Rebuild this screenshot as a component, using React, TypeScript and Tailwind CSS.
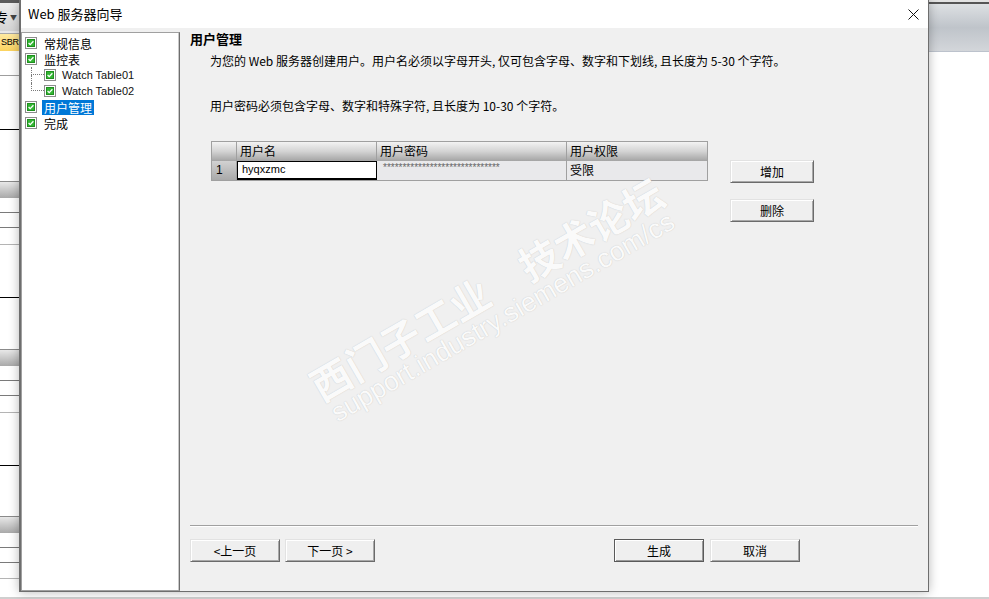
// Web server wizard dialog (user management page)

function Tick() {
  return (
    <svg width="12" height="12" viewBox="0 0 12 12" className="shrink-0">
      <rect x="0.5" y="0.5" width="11" height="11" fill="#fff" stroke="#8d8d8d" />
      <rect x="2.5" y="2.5" width="7" height="7" fill="#33b533" stroke="#1f8f1f" />
      <path d="M3.6 6 L5.2 7.6 L8.4 4.3" fill="none" stroke="#fff" strokeWidth="1.3" />
    </svg>
  );
}

function Btn({
  children,
  className = "",
  def,
}: {
  children: React.ReactNode;
  className?: string;
  def?: boolean;
}) {
  return (
    <button
      className={`h-[23px] text-[12px] leading-[21px] text-black bg-[#efefef] border ${
        def
          ? "border-[#5a5a5a] shadow-[inset_1px_1px_0_#fff,inset_-1px_-1px_0_#9a9a9a]"
          : "border-t-[#e2e2e2] border-l-[#e2e2e2] border-r-[#6b6b6b] border-b-[#6b6b6b] shadow-[inset_1px_1px_0_#fff,inset_-1px_-1px_0_#a8a8a8]"
      } ${className}`}
    >
      {children}
    </button>
  );
}

const tree = [
  { label: "常规信息", child: false },
  { label: "监控表", child: false },
  { label: "Watch Table01", child: true, last: false },
  { label: "Watch Table02", child: true, last: true },
  { label: "用户管理", child: false, sel: true },
  { label: "完成", child: false },
];

function LeftStrip() {
  return (
    <div className="w-[19px] shrink-0 flex flex-col bg-white overflow-hidden">
      <div className="h-[3px] bg-[#5b5b5b]"></div>
      <div className="h-[28px] flex items-center bg-linear-to-b from-[#ededed] to-[#d5d5d5] text-[13px] leading-[16px]">
        <span className="-ml-[5px]">专</span>
        <span className="text-[7px] ml-[2px] text-[#444]">▼</span>
      </div>
      <div className="h-[3px] border-b border-[#a8a8a8] bg-[#e8e8e8]"></div>
      <div className="h-[17px] bg-linear-to-b from-[#ffeaa0] to-[#fbd35e] text-[9px] leading-[17px] tracking-[-0.3px] font-['Liberation_Sans',sans-serif] pl-[1px]">
        SBR
      </div>
      <div className="h-[25px] border-b border-[#9e9e9e]"></div>
      <div className="h-[54px] border-b border-black"></div>
      <div className="h-[51px]"></div>
      <div className="h-[17px] border-t border-[#8a8a8a] bg-linear-to-b from-[#e8e8e8] to-[#a9a9a9]"></div>
      <div className="h-[15px] border-b border-[#7a7a7a]"></div>
      <div className="h-[15px] border-b border-[#7a7a7a]"></div>
      <div className="h-[17px] border-b border-[#b4b4b4]"></div>
      <div className="h-[53px] border-b border-black"></div>
      <div className="h-[51px]"></div>
      <div className="h-[17px] border-t border-[#8a8a8a] bg-linear-to-b from-[#e8e8e8] to-[#a9a9a9]"></div>
      <div className="h-[15px] border-b border-[#7a7a7a]"></div>
      <div className="h-[15px] border-b border-[#7a7a7a]"></div>
      <div className="h-[17px] border-b border-[#b4b4b4]"></div>
      <div className="h-[53px] border-b border-black"></div>
      <div className="h-[50px]"></div>
      <div className="h-[17px] border-t border-[#8a8a8a] bg-linear-to-b from-[#e8e8e8] to-[#a9a9a9]"></div>
      <div className="h-[15px] border-b border-[#7a7a7a]"></div>
      <div className="h-[15px] border-b border-[#7a7a7a]"></div>
      <div className="h-[16px] border-b border-[#b4b4b4]"></div>
    </div>
  );
}

function RightStrip() {
  return (
    <div className="flex-1 flex flex-col bg-white">
      <div className="h-[2px] bg-[#e2e2e2]"></div>
      <div className="h-[2px] bg-[#555]"></div>
      <div className="h-[48px] border-b border-[#bcc2cc] bg-linear-to-b from-[#dde0e3] via-[#bfc4ca] to-[#d3d6da]"></div>
    </div>
  );
}

export default function App() {
  return (
    <div className="w-[989px] h-[599px] relative overflow-hidden bg-white flex flex-col font-['Noto_Sans_CJK_SC','Noto_Sans',sans-serif] text-black">
      <div className="h-[592px] flex">
        <LeftStrip />

        {/* dialog */}
        <div className="relative z-10 w-[910px] shrink-0 flex flex-col bg-[#f0f0f0] border-l-2 border-r border-b border-[#6e6e6e] shadow-[0_0_10px_rgba(0,0,0,0.28)]">
          <div className="h-[28px] bg-white flex items-center pl-[7px] pr-[9px]">
            <span className="text-[13px] leading-[16px]">Web 服务器向导</span>
            <svg width="11" height="11" viewBox="0 0 11 11" className="ml-auto">
              <path d="M0.5 0.5 L10.5 10.5 M10.5 0.5 L0.5 10.5" stroke="#111" strokeWidth="1" />
            </svg>
          </div>

          <div className="flex-1 flex pt-[4px]">
            {/* tree */}
            <div className="w-[159px] shrink-0 bg-white border border-[#a0a0a0] border-r-[#6e6e6e] shadow-[inset_-1px_0_0_#c9c9c9] pt-[2px]">
              {tree.map((t) =>
                t.child ? (
                  <div key={t.label} className="h-[16px] flex items-center pl-[9px]">
                    <div className="w-[13px] h-[16px] flex flex-col shrink-0">
                      <div className="h-[8px] border-l border-b border-dotted border-[#7a7a7a]"></div>
                      <div className={`h-[8px] ${t.last ? "" : "border-l border-dotted border-[#7a7a7a]"}`}></div>
                    </div>
                    <Tick />
                    <span className="ml-[4px] px-[2px] text-[11px] leading-[15px] font-['Liberation_Sans',sans-serif] text-[#111]">
                      {t.label}
                    </span>
                  </div>
                ) : (
                  <div key={t.label} className="h-[16px] flex items-center pl-[3px]">
                    <Tick />
                    <span
                      className={`ml-[5px] px-[2px] text-[12px] leading-[15px] ${
                        t.sel ? "bg-[#0078d7] text-white" : ""
                      }`}
                    >
                      {t.label}
                    </span>
                  </div>
                )
              )}
            </div>

            {/* page */}
            <div className="flex-1 flex flex-col px-[10px] pb-[29px]">
              <div className="text-[13px] leading-[14px] font-bold">用户管理</div>
              <div className="mt-[7px] ml-[20px] text-[12px] leading-[16px]">
                为您的 Web 服务器创建用户。用户名必须以字母开头, 仅可包含字母、数字和下划线, 且长度为 5-30 个字符。
              </div>
              <div className="mt-[29px] ml-[20px] text-[12px] leading-[16px]">
                用户密码必须包含字母、数字和特殊字符, 且长度为 10-30 个字符。
              </div>

              <div className="mt-[27px] ml-[21px] flex items-start">
                <div className="w-[497px] border border-[#a0a0a0] text-[12px]">
                  <div className="h-[19px] flex bg-linear-to-b from-[#f3f3f3] via-[#d3d3d3] to-[#a4a4a4] leading-[18px]">
                    <div className="w-[25px] border-r border-[#a0a0a0]"></div>
                    <div className="w-[140px] border-r border-[#a0a0a0] pl-[3px]">用户名</div>
                    <div className="w-[190px] border-r border-[#a0a0a0] pl-[3px]">用户密码</div>
                    <div className="w-[140px] pl-[3px]">用户权限</div>
                  </div>
                  <div className="h-[19px] flex bg-[#e9e9eb] leading-[18px]">
                    <div className="w-[25px] border-r border-[#a0a0a0] bg-linear-to-b from-[#d2d2d2] to-[#a9a9a9] pl-[4px] font-['Liberation_Sans',sans-serif]">
                      1
                    </div>
                    <div className="w-[140px] bg-white border border-b-2 border-black pl-[4px] text-[11px] leading-[15px] font-['Liberation_Sans',sans-serif]">
                      hyqxzmc
                    </div>
                    <div className="w-[190px] border-r border-[#a0a0a0] pl-[6px] pt-[2px] text-[10px] leading-[10px] font-['Liberation_Sans',sans-serif] text-[#666]">
                      ******************************
                    </div>
                    <div className="w-[140px] pl-[3px]">受限</div>
                  </div>
                </div>

                <div className="ml-[22px] pt-[19px] flex flex-col">
                  <Btn className="w-[84px]">增加</Btn>
                  <Btn className="w-[84px] mt-[16px]">删除</Btn>
                </div>
              </div>

              <div className="mt-auto border-t border-[#a0a0a0] border-b border-b-white"></div>
              <div className="mt-[12px] flex">
                <Btn className="w-[90px]">&lt;上一页</Btn>
                <Btn className="w-[90px] ml-[5px]">下一页 &gt;</Btn>
                <Btn def className="w-[90px] ml-[239px]">生成</Btn>
                <Btn className="w-[90px] ml-[6px]">取消</Btn>
              </div>
            </div>
          </div>
        </div>

        <RightStrip />
      </div>
      <div className="flex-1 border-b-2 border-[#cfcfcf] bg-white"></div>

      {/* forum watermark */}
      <div className="absolute left-[493px] top-[300px] -translate-x-1/2 -translate-y-1/2 -rotate-[30deg] z-20 pointer-events-none whitespace-nowrap text-center text-[#fafafa] [text-shadow:0_0_1px_#bcbcbc]">
        <div className="text-[40px] leading-[40px] font-bold">西门子工业　技术论坛</div>
        <div className="text-[27px] leading-[27px] font-['Liberation_Sans',sans-serif]">
          support.industry.siemens.com/cs
        </div>
      </div>
    </div>
  );
}
